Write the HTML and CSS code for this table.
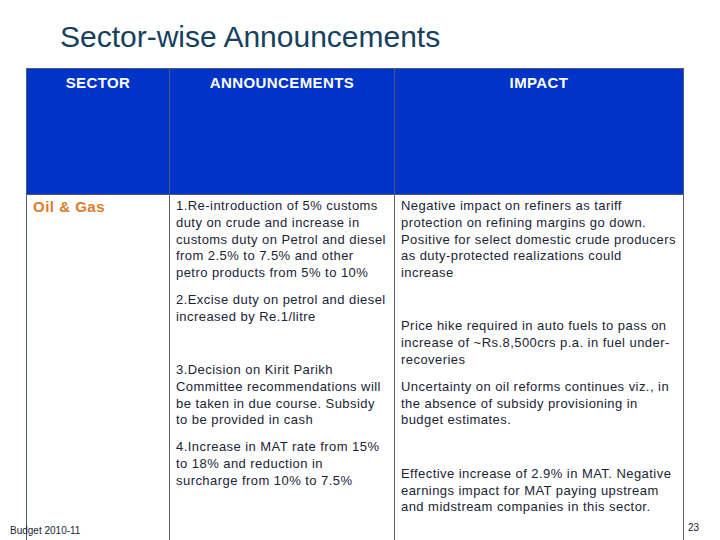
FILE: index.html
```html
<!DOCTYPE html>
<html>
<head>
<meta charset="utf-8">
<link rel="stylesheet" href="styles.css">
</head>
<body>
<div class="slide">
  <h1 class="title">Sector-wise Announcements</h1>
  <div class="table">
    <div class="hcell">SECTOR</div>
    <div class="hcell">ANNOUNCEMENTS</div>
    <div class="hcell">IMPACT</div>
    <div class="cell sector">Oil &amp; Gas</div>
    <div class="cell">
      <p class="p1">1.Re-introduction of 5% customs<br>duty on crude and increase in<br>customs duty on Petrol and diesel<br>from 2.5% to 7.5% and other<br>petro products from 5% to 10%</p>
      <p class="gap-s">2.Excise duty on petrol and diesel<br>increased by Re.1/litre</p>
      <p class="gap-l">3.Decision on Kirit Parikh<br>Committee recommendations will<br>be taken in due course. Subsidy<br>to be provided in cash</p>
      <p class="gap-s">4.Increase in MAT rate from 15%<br>to 18% and reduction in<br>surcharge from 10% to 7.5%</p>
    </div>
    <div class="cell">
      <p class="p1">Negative impact on refiners as tariff<br>protection on refining margins go down.<br>Positive for select domestic crude producers<br>as duty-protected realizations could<br>increase</p>
      <p class="gap-l">Price hike required in auto fuels to pass on<br>increase of ~Rs.8,500crs p.a. in fuel under-<br>recoveries</p>
      <p class="gap-s">Uncertainty on oil reforms continues viz., in<br>the absence of subsidy provisioning in<br>budget estimates.</p>
      <p class="gap-l">Effective increase of 2.9% in MAT. Negative<br>earnings impact for MAT paying upstream<br>and midstream companies in this sector.</p>
    </div>
  </div>
  <div class="footer">Budget 2010-11</div>
  <div class="pagenum">23</div>
</div>
</body>
</html>
```
FILE: styles.css
```css
html, body {
  margin: 0;
  padding: 0;
  background: #ffffff;
}
.slide {
  position: relative;
  width: 720px;
  height: 540px;
  overflow: hidden;
  font-family: "Liberation Sans", Arial, sans-serif;
}
.title {
  margin: 0;
  padding: 19px 0 0 60px;
  height: 68px;
  box-sizing: border-box;
  font-weight: normal;
  font-size: 30px;
  line-height: 36px;
  color: #15405f;
}
.table {
  margin-left: 26px;
  width: 658px;
  display: grid;
  grid-template-columns: 143px 225px 289px;
  grid-template-rows: 126px 360px;
  box-sizing: border-box;
  border-top: 1px solid #4f5a78;
  border-left: 1px solid #4f5a78;
}
.hcell {
  background: #0033c8;
  color: #ffffff;
  font-weight: bold;
  font-size: 15px;
  letter-spacing: 0.4px;
  text-align: center;
  padding-top: 6px;
  line-height: 16px;
  border-right: 1px solid #4f5a78;
  border-bottom: 1px solid #4f5a78;
}
.cell {
  border-right: 1px solid #5a5f68;
  padding: 3px 6px 0 6px;
  font-size: 13px;
  letter-spacing: 0.45px;
  line-height: 16.8px;
  color: #1a2436;
  white-space: nowrap;
}
.cell p {
  margin: 0;
}
.cell .gap-s {
  margin-top: 10px;
}
.cell .gap-l {
  margin-top: 36.5px;
}
.sector {
  color: #e07b2a;
  font-weight: bold;
  font-size: 15px;
  letter-spacing: 0.5px;
  padding-top: 4px;
}
.footer {
  position: absolute;
  left: 10px;
  top: 525px;
  font-size: 10px;
  line-height: 12px;
  color: #1a2436;
}
.pagenum {
  position: absolute;
  left: 688px;
  top: 522px;
  font-size: 10px;
  line-height: 12px;
  color: #1a2436;
}
```
